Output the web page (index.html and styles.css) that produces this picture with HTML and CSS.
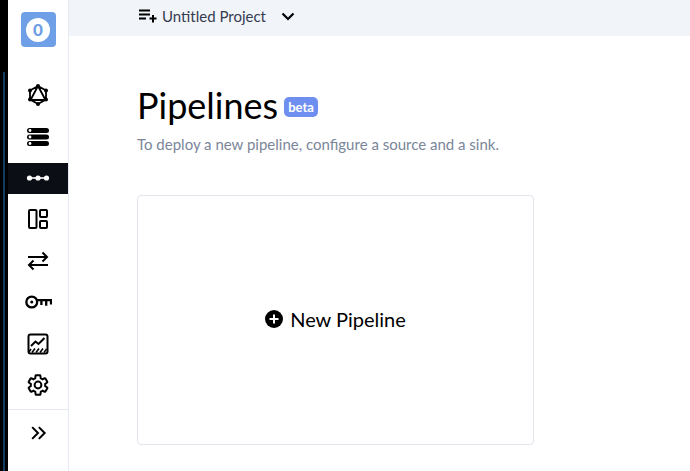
FILE: index.html
```html
<!DOCTYPE html>
<html lang="en">
<head>
<meta charset="utf-8">
<title>Pipelines</title>
<link rel="stylesheet" href="styles.css">
</head>
<body>
<div class="app">
  <div class="edge"><span class="edge-blue"></span></div>
  <nav class="rail">
    <div class="logo"><span class="logo-ring">0</span></div>
    <div class="rail-items">
      <a class="rail-item">
        <svg class="ic" viewBox="0 0 24 24"><path d="M12 3 20 7.5V16.5L12 21 4 16.5V7.5Z M12 3 19.5 17H4.5Z" fill="none" stroke="#000" stroke-width="1.8" stroke-linejoin="round"/><g fill="#000"><circle cx="12" cy="3" r="2"/><circle cx="20" cy="7.5" r="2"/><circle cx="20" cy="16.5" r="2"/><circle cx="12" cy="21" r="2"/><circle cx="4" cy="16.5" r="2"/><circle cx="4" cy="7.5" r="2"/></g></svg>
      </a>
      <a class="rail-item">
        <svg class="ic" viewBox="0 0 24 24"><g fill="#000"><rect x="1" y="3" width="22" height="5" rx="2.5"/><rect x="1" y="9.5" width="22" height="5" rx="2.5"/><rect x="1" y="16" width="22" height="5" rx="2.5"/></g><g fill="#fff"><circle cx="4" cy="5.5" r="1.4"/><circle cx="4" cy="12" r="1.4"/><circle cx="4" cy="18.5" r="1.4"/></g></svg>
      </a>
      <a class="rail-item active">
        <svg class="ic" viewBox="0 0 24 24"><path d="M3 12H21" stroke="#fff" stroke-width="1.6"/><g fill="#fff"><circle cx="3.5" cy="12" r="2.6"/><circle cx="12" cy="12" r="2.6"/><circle cx="20.5" cy="12" r="2.6"/></g></svg>
      </a>
      <a class="rail-item">
        <svg class="ic" viewBox="0 0 24 24"><g fill="none" stroke="#000" stroke-width="2"><rect x="3" y="3" width="7.5" height="18" rx="1"/><rect x="14" y="3" width="7" height="7" rx="1"/><rect x="14" y="14" width="7" height="7" rx="1"/></g></svg>
      </a>
      <a class="rail-item">
        <svg class="ic" viewBox="0 0 24 24"><g fill="none" stroke="#000" stroke-width="2"><path d="M2 8H21M16.5 3.5 21 8 16.5 12.5" stroke-linejoin="miter"/><path d="M22 16H3M7.5 11.5 3 16 7.5 20.5"/></g></svg>
      </a>
      <a class="rail-item">
        <svg class="ic ic-key" viewBox="0 0 28 24"><g fill="none" stroke="#000" stroke-width="2.4"><circle cx="7" cy="12" r="5.6"/><path d="M12.5 10H27V14.5M22 10V16M17 10V15"/></g><circle cx="7" cy="12" r="1.6" fill="#000"/></svg>
      </a>
      <a class="rail-item">
        <svg class="ic" viewBox="0 0 24 24"><rect x="2.5" y="2.5" width="19" height="19" rx="2" fill="none" stroke="#000" stroke-width="2"/><path d="M5 14 9.5 9.5 12.5 12 18.5 6" fill="none" stroke="#000" stroke-width="2"/><path d="M6 20.5 9 16.5M10 20.5 13 16.5M14 20.5 17 16.5M18 20.5 20.5 17M3 20 5 17" stroke="#000" stroke-width="1.6"/></svg>
      </a>
      <a class="rail-item">
        <svg class="ic" viewBox="0 0 24 24"><path d="M19.14 12.94a7.1 7.1 0 0 0 0-1.88l2.03-1.58a.5.5 0 0 0 .12-.64l-1.92-3.32a.5.5 0 0 0-.61-.22l-2.39.96a7 7 0 0 0-1.62-.94l-.36-2.54a.5.5 0 0 0-.5-.42h-3.84a.5.5 0 0 0-.5.42l-.36 2.54c-.58.24-1.13.56-1.62.94l-2.39-.96a.5.5 0 0 0-.61.22L2.71 8.84a.5.5 0 0 0 .12.64l2.03 1.58a7.1 7.1 0 0 0 0 1.88l-2.03 1.58a.5.5 0 0 0-.12.64l1.92 3.32c.12.22.38.3.61.22l2.39-.96c.5.38 1.04.7 1.62.94l.36 2.54c.04.24.25.42.5.42h3.84c.25 0 .46-.18.5-.42l.36-2.54c.58-.24 1.13-.56 1.62-.94l2.39.96c.23.08.49 0 .61-.22l1.92-3.32a.5.5 0 0 0-.12-.64Z" fill="none" stroke="#000" stroke-width="2"/><circle cx="12" cy="12" r="3.4" fill="none" stroke="#000" stroke-width="2"/></svg>
      </a>
    </div>
    <div class="rail-foot">
      <svg class="ic" viewBox="0 0 24 24"><path d="M5 5 12 12 5 19M13 5 20 12 13 19" fill="none" stroke="#000" stroke-width="2.4"/></svg>
    </div>
  </nav>
  <div class="main">
    <header class="topbar">
      <svg class="ic-queue" viewBox="0 0 18 14"><path d="M0 1.5H11M0 5.5H11M0 9.5H7M10.500 9.500H17.500M14 6V13.500" fill="none" stroke="#000" stroke-width="2"/></svg>
      <span class="project">Untitled Project</span>
      <svg class="ic-chevron" viewBox="0 0 14 9"><path d="M1.500 1.500 7 7 12.500 1.500" fill="none" stroke="#000" stroke-width="2.200"/></svg>
    </header>
    <main class="content">
      <div class="title-row">
        <h1 class="title">Pipelines</h1>
        <span class="badge">beta</span>
      </div>
      <p class="subtitle">To deploy a new pipeline, configure a source and a sink.</p>
      <button class="new-card">
        <svg class="ic-plus" viewBox="0 0 18 18"><circle cx="9" cy="9" r="9" fill="#000"/><path d="M9 4.500V13.500M4.500 9H13.500" stroke="#fff" stroke-width="2"/></svg>
        <span>New Pipeline</span>
      </button>
    </main>
  </div>
</div>
</body>
</html>
```
FILE: styles.css
```css
* { box-sizing: border-box; }
html, body { margin: 0; height: 100%; overflow: hidden; background: #fff; }
body { font-family: Lato, "Open Sans", sans-serif; }
.app { display: flex; height: 471px; width: 690px; }
.edge { width: 8px; background: #000; position: relative; flex: none; }
.edge-blue { position: absolute; left: 3px; top: 72px; bottom: 0; width: 2px; background: #0f3d63; }
.rail { width: 61px; flex: none; border-right: 1px solid #e4e9f2; display: flex; flex-direction: column; }
.logo { height: 73px; padding-top: 12px; display: flex; justify-content: center; align-items: flex-start; }
.logo-ring { width: 35px; height: 35px; border-radius: 4px; background: #6f9fe6; display: flex; align-items: center; justify-content: center; position: relative; z-index: 0; color: #6f9fe6; font-weight: 900; font-size: 17px; }
.logo-ring::before { content: ""; position: absolute; z-index: -1; width: 24px; height: 24px; left: 5.5px; top: 5.5px; border-radius: 50%; background: #fff; }
.rail-items { display: flex; flex-direction: column; height: 336px; }
.rail-item { height: 41.500px; display: flex; align-items: center; justify-content: center; padding-bottom: 0; }
.rail-items .rail-item:nth-child(1) { height: 43px; }
.rail-item.active { background: #0b0e14; height: 31px; margin: 5px 0; }
.ic { width: 24px; height: 24px; display: block; }
.ic-key { width: 27px; }
.rail-foot { border-top: 1px solid #e4e9f2; flex: 1; display: flex; align-items: center; justify-content: center; padding-bottom: 16px; }
.rail-foot .ic { width: 20px; height: 20px; }
.main { flex: 1; min-width: 0; display: flex; flex-direction: column; }
.topbar { height: 36px; background: #f1f4f9; display: flex; align-items: center; padding: 0 0 4px 70px; }
.ic-queue { width: 18px; height: 14px; margin-right: 5px; }
.project { font-size: 15px; color: #343b4f; }
.ic-chevron { width: 14px; height: 9px; margin-left: 15px; }
.content { padding: 48px 0 0 68px; }
.title-row { display: flex; align-items: center; gap: 6px; height: 42px; }
.title { margin: 0; font-size: 36px; font-weight: 400; color: #000; line-height: 42px; }
.badge { background: #6f8ff0; color: #fff; font-size: 13px; font-weight: 700; border-radius: 5px; padding: 2px 4px; line-height: 16px; margin-top: 4px; }
.subtitle { margin: 8px 0 0; font-size: 15px; line-height: 20px; color: #7a8699; }
.new-card { margin-top: 41px; width: 397px; height: 250px; background: #fff; border: 1px solid #e4e4ec; border-radius: 4px; display: flex; align-items: center; justify-content: center; gap: 7px; font: inherit; font-size: 20px; color: #000; padding: 0 0 2px; }
.ic-plus { width: 18px; height: 18px; }
```
